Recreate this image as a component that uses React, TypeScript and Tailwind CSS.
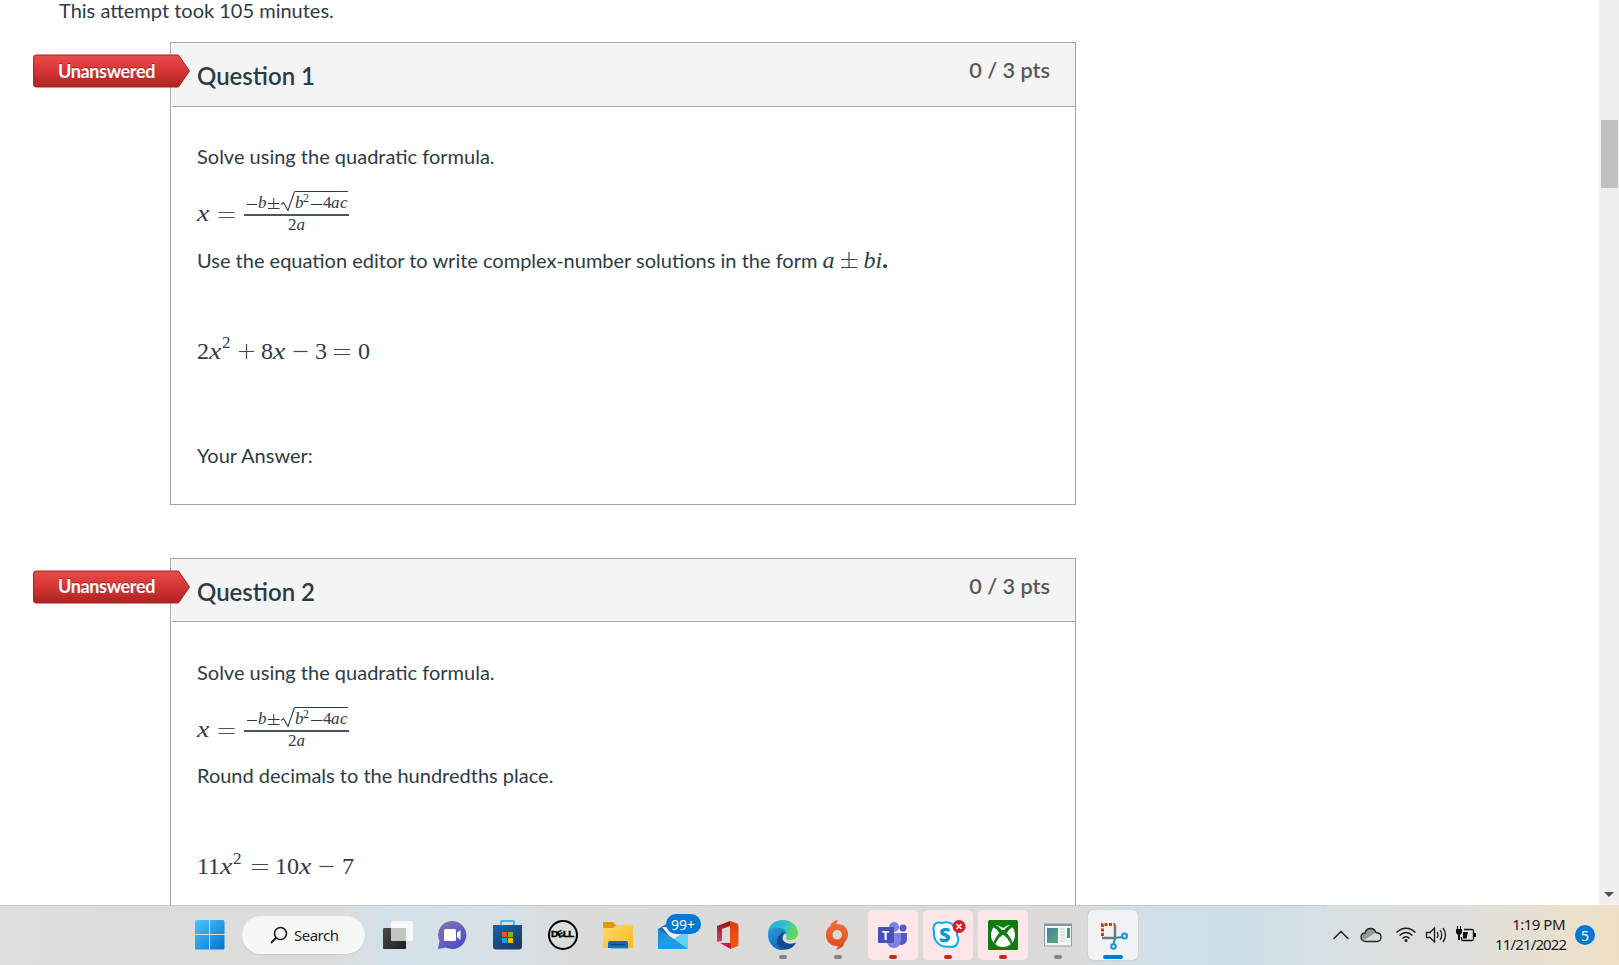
import type { ReactNode } from 'react';

type QuestionProps = {
  title: string;
  note: ReactNode;
  equation: ReactNode;
};

const X = () => <i className="inline-block w-[13px] scale-x-115 origin-left">x</i>;

const Fraction = () => (
  <div className="flex h-[47px] items-start text-[#2d3b45] font-['Liberation_Serif',serif]">
    <span className="w-[20px] pt-[10px] text-[24px] leading-[26px]"><X /></span>
    <svg width="18" height="45" className="mr-[9px]">
      <path d="M1.500 22.500H17.500M1.500 27.500H17.500" stroke="#4b5760" strokeWidth="1.200" />
    </svg>
    <div className="mt-px w-[105px] text-[17px] leading-[18px]">
      <div className="flex h-[25px] items-start border-b-2 border-[#4b5760] pl-[2px]">
        <svg width="11" height="22" className="shrink-0"><path d="M1 13.500H11" stroke="#2d3b45" /></svg>
        <i className="w-[10px] pt-[3px] pl-px">b</i>
        <svg width="13" height="22" className="shrink-0">
          <path d="M1 12.500H12.500M6.700 7V17.500M1 17.500H12.500" stroke="#2d3b45" />
        </svg>
        <svg width="15" height="22" className="shrink-0">
          <path d="M1 13.500L3.500 11.500L8 19.500L14.500 0.500" fill="none" stroke="#2d3b45" strokeWidth="1.100" />
        </svg>
        <div className="flex h-[20px] w-[53px] border-t border-[#2d3b45]">
          <i className="w-[8px] pt-[2px]">b</i>
          <span className="w-[7px] text-[12px] leading-[12px]">2</span>
          <svg width="13" height="20" className="shrink-0"><path d="M1 12.500H12.500" stroke="#2d3b45" /></svg>
          <span className="w-[8px] pt-[2px]">4</span>
          <i className="w-[9px] pt-[2px]">a</i>
          <i className="w-[8px] pt-[2px]">c</i>
        </div>
      </div>
      <div className="text-center">2<i>a</i></div>
    </div>
  </div>
);

const Op = ({ sign }: { sign: '+' | '-' | '=' | '±' }) => {
  const paths = {
    '+': 'M1 11.5H16M8.500 4V19',
    '-': 'M1.500 11.500H15.500',
    '=': 'M1 9.500H17M1 14.500H17',
    '±': 'M1 10.500H17M9 3V18M1 18.500H17',
  };
  return (
    <svg width="18" height="22" className="inline-block shrink-0">
      <path d={paths[sign]} stroke="#3d4a53" strokeWidth="1.200" fill="none" />
    </svg>
  );
};

const Sup = () => <sup className="relative -top-[8px] inline-block w-[9px] text-[17px] leading-none align-baseline">2</sup>;

const UnansweredTag = () => (
  <div className="absolute -left-[138px] top-[11px] h-[34px] w-[158px]">
    <svg width="158" height="34" className="absolute inset-0">
      <defs>
        <linearGradient id="tag" x1="0" y1="0" x2="0" y2="1">
          <stop offset="0" stopColor="#e94b48" />
          <stop offset="0.400" stopColor="#da3a39" />
          <stop offset="1" stopColor="#b02222" />
        </linearGradient>
      </defs>
      <path d="M3 1H145.500L156.500 17L145.500 33H3Q0.500 33 0.500 30.500V3.500Q0.500 1 3 1Z" fill="url(#tag)" stroke="#a82323" />
    </svg>
    <span className="absolute left-[25px] top-[5.500px] text-[18px] leading-[22px] font-bold tracking-[-0.35px] text-white [text-shadow:0_-1px_0_rgba(80,0,0,0.4)]">Unanswered</span>
  </div>
);

const Question = ({ title, note, equation }: QuestionProps) => (
  <section className="relative h-[462.500px] w-[906px] border border-[#a5a5a5] text-[20px] leading-[24px]">
    <UnansweredTag />
    <div className="ml-px flex h-[63.500px] items-start justify-between border-b border-[#a5a5a5] bg-[#f4f4f4] pl-[25px] pr-[25px]">
      <h2 className="pt-[19px] text-[24px] leading-[28px] font-semibold text-[#2d3b45]">{title}</h2>
      <span className="pt-[14px] text-[21.700px] leading-[26px] font-semibold text-[#595959]">0 / 3 pts</span>
    </div>
    <div className="flex flex-col pl-[26px] pt-[37.500px]">
      <p>Solve using the quadratic formula.</p>
      <div className="pt-[22px]"><Fraction /></div>
      <div className="flex h-[24px] mt-[10.500px]">{note}</div>
      <div className="mt-[64px] flex h-[30px] items-center font-['Liberation_Serif',serif] text-[24px]">{equation}</div>
      <p className="mt-[77.500px]">Your Answer:</p>
    </div>
  </section>
);

const WindowsIcon = () => (
  <svg width="30" height="30" viewBox="0 0 30 30">
    <defs>
      <linearGradient id="win" x1="0" y1="0" x2="1" y2="1"><stop stopColor="#4cc9fb" /><stop offset="1" stopColor="#0072d2" /></linearGradient>
    </defs>
    <path d="M0 1.500Q0 0 1.500 0H14V14H0ZM15 0H28Q29.500 0 29.500 1.500V14H15ZM0 15H14V29.500H1.500Q0 29.500 0 28ZM15 15H29.500V28Q29.500 29.500 28 29.500H15Z" fill="url(#win)" />
  </svg>
);

const TaskViewIcon = () => (
  <svg width="30" height="30" viewBox="0 0 30 30">
    <defs><linearGradient id="tv" x1="0" y1="0" x2="1" y2="1"><stop stopColor="#4a4a48" /><stop offset="1" stopColor="#1f1f1f" /></linearGradient></defs>
    <rect x="0" y="8" width="23" height="21" rx="1" fill="url(#tv)" />
    <rect x="8" y="1" width="22" height="20" rx="1" fill="#f8f8f8" />
    <path d="M8 8H23V21H9Q8 21 8 20Z" fill="#c4c4c3" />
  </svg>
);

const ChatIcon = () => (
  <svg width="30" height="30" viewBox="0 0 30 30">
    <defs><linearGradient id="chat" x1="0" y1="0" x2="0.700" y2="1"><stop stopColor="#8d6fa8" /><stop offset="0.500" stopColor="#6b62c4" /><stop offset="1" stopColor="#4f4ac5" /></linearGradient></defs>
    <path d="M14.500 1A14 14 0 1 1 8 27.500L0 29L1.500 21A14 14 0 0 1 14.500 1Z" fill="url(#chat)" />
    <rect x="6" y="9" width="12" height="12" rx="1.500" fill="#fff" />
    <path d="M19 13L22.500 10V20L19 17Z" fill="#fff" />
  </svg>
);

const StoreIcon = () => (
  <svg width="30" height="30" viewBox="0 0 30 30">
    <defs><linearGradient id="store" x1="0" y1="0" x2="0.700" y2="1"><stop stopColor="#0b67b2" /><stop offset="1" stopColor="#203864" /></linearGradient></defs>
    <path d="M8 6V2Q8 1 9 1H20Q21 1 21 2V6" fill="none" stroke="#30bdf2" strokeWidth="2" />
    <path d="M0 5H29V26.500Q29 29.500 26 29.500H3Q0 29.500 0 26.500Z" fill="url(#store)" />
    <path d="M9 12H14V17H9Z" fill="#f25022" /><path d="M15 12H20V17H15Z" fill="#7fba00" />
    <path d="M9 18H14V23H9Z" fill="#00a4ef" /><path d="M15 18H20V23H15Z" fill="#ffb900" />
  </svg>
);

const DellIcon = () => (
  <span className="flex size-[30px] items-center justify-center rounded-full border-2 border-black font-['Liberation_Sans',sans-serif] text-[9px] font-bold tracking-[-0.8px] text-black">
    <span className="scale-x-110 [-webkit-text-stroke:0.4px_black]">D<span className="inline-block -rotate-[30deg]">E</span>LL</span>
  </span>
);

const FolderIcon = () => (
  <svg width="30" height="30" viewBox="0 0 30 30">
    <defs><linearGradient id="folder" x1="0" y1="0" x2="1" y2="1"><stop stopColor="#ffdc6d" /><stop offset="1" stopColor="#fbb917" /></linearGradient></defs>
    <path d="M0 3Q0 2 1 2H10L13 5H29V12H0Z" fill="#dc9b08" />
    <path d="M0 8H10L14 5H29Q30 5 30 6V28H0Z" fill="url(#folder)" />
    <path d="M5 28V23Q5 21 7 21H23Q25 21 25 23V28Z" fill="#0b69b9" /><path d="M8 24.500H22" stroke="#06407b" /><path d="M8 28H25" stroke="#1895e6" />
  </svg>
);

const MailIcon = () => (
  <div className="relative">
    <svg width="30" height="30" viewBox="0 0 30 30">
      <defs><linearGradient id="mail" x1="0" y1="0" x2="1" y2="1"><stop stopColor="#1683d5" /><stop offset="1" stopColor="#35b8ef" /></linearGradient></defs>
      <path d="M0 9L15 0L30 9V29H0Z" fill="#1670b8" /><path d="M4 7H26V16L15 21Z" fill="#f1f1f1" />
      <path d="M0 9L16 19L30 10V29H0Z" fill="url(#mail)" /><path d="M0 29L16 19L30 29Z" fill="#209be0" /><path d="M16 19L30 10V29Z" fill="#65cff6" />
    </svg>
    <span className="absolute left-[8px] -top-[6px] flex h-[20px] w-[35px] items-center justify-center rounded-full bg-[#0078d4] text-[14px] text-white">99+</span>
  </div>
);

const OfficeIcon = () => (
  <svg width="24" height="30" viewBox="0 0 24 30">
    <defs>
      <linearGradient id="office" x1="0" y1="0" x2="0" y2="1"><stop stopColor="#e13b16" /><stop offset="1" stopColor="#f55d0a" /></linearGradient>
      <linearGradient id="office2" x1="0" y1="0" x2="0" y2="1"><stop stopColor="#8d1013" /><stop offset="1" stopColor="#d94269" /></linearGradient>
    </defs>
    <path d="M14 1L1 6V22L6 21V9L14 6Z" fill="url(#office2)" />
    <path d="M14 1L21 3.500Q22.500 4 22.500 6V24Q22.500 26 21 26.500L14 29Z" fill="url(#office)" />
    <path d="M4 23H15V29L13 28Z" fill="#d51539" />
  </svg>
);

const EdgeIcon = () => (
  <svg width="30" height="30" viewBox="0 0 30 30">
    <defs>
      <linearGradient id="edge1" x1="0" y1="0" x2="1" y2="0.300"><stop stopColor="#279ddd" /><stop offset="0.550" stopColor="#2fc2cf" /><stop offset="1" stopColor="#62d957" /></linearGradient>
      <linearGradient id="edge2" x1="0" y1="0" x2="0.600" y2="1"><stop stopColor="#25a2e4" /><stop offset="1" stopColor="#1162b5" /></linearGradient>
    </defs>
    <path d="M0 14C0 5 7 0 15 0C24 0 30 6 30 13C30 18 26 20 22 20C18 20 17 19 19 16C20 12 16 10 12 10C6 9 2 11 0 16Z" fill="url(#edge1)" />
    <path d="M0 15C1 9 6 7 11 8C16 8 19 12 19 16C18 13 14 11 11 15C7 20 11 28 17 30C7 31 0 24 0 15Z" fill="url(#edge2)" />
    <path d="M12 14C6 20 10 30 18 29.500C23 29 27 26 28 22C26 24 18 25 15 20C14 17 15 15 17 13C15 12 13 13 12 14Z" fill="#114c91" />
  </svg>
);

const OriginIcon = () => (
  <svg width="24" height="30" viewBox="0 0 24 30">
    <defs><linearGradient id="origin" x1="0" y1="0" x2="0" y2="1"><stop stopColor="#f07236" /><stop offset="1" stopColor="#d94c22" /></linearGradient></defs>
    <path transform="translate(-0.800 0)" d="M11 4L13 0C9 0 6 3 5 6C-1 10 0 20 4 23C7 26 10 26 13 26L11 30C16 28 19 26 19 23C25 17 23 10 20 7C17 4 14 4 11 4ZM12 10A4.800 4.800 0 1 1 12 19.600A4.800 4.800 0 1 1 12 10Z" fill="url(#origin)" fillRule="evenodd" />
  </svg>
);

const TeamsIcon = () => (
  <svg width="30" height="30" viewBox="0 0 30 30">
    <circle cx="16" cy="7" r="5" fill="#7b83eb" /><circle cx="25" cy="8" r="3.500" fill="#5059c9" />
    <path d="M20 13H29V20Q28 25 22 25H20Z" fill="#5059c9" /><path d="M9 13H23V20Q22 28 16 28Q11 28 9 23Z" fill="#7b83eb" />
    <rect x="0" y="7" width="16" height="16" rx="1" fill="#4650b8" /><text x="3.800" y="20" fontSize="13" fontWeight="700" fill="#fff" fontFamily="Open Sans">T</text>
  </svg>
);

const SkypeIcon = () => (
  <svg width="34" height="30" viewBox="0 0 34 30" className="ml-[3px]">
    <path d="M2 11.500C0 5 4 1 10 3C19 0 26 7 25 15C28.500 22 24 28.500 17 26.500C8 28 1 21 2 11.500Z" fill="#fff" stroke="#00aef0" strokeWidth="2" />
    <text x="7" y="22" fontSize="20" fontWeight="800" fill="#0799da" fontFamily="Open Sans">S</text>
    <circle cx="27" cy="6.500" r="6.500" fill="#e81123" /><path d="M24.500 4L29.500 9M29.500 4L24.500 9" stroke="#fff" strokeWidth="1.700" />
  </svg>
);

const XboxIcon = () => (
  <svg width="30" height="30" viewBox="0 0 30 30">
    <rect width="30" height="30" rx="1.500" fill="#107c10" /><circle cx="15" cy="15" r="12" fill="#fff" />
    <path d="M7 5Q11 5 15 8Q19 5 23 5Q19 2 15 2Q11 2 7 5Z" fill="#107c10" />
    <path d="M6 25C6 20 10 14 15 10C20 14 24 20 24 25Q20 17 15 14Q10 17 6 25Z" fill="#107c10" stroke="#107c10" /><path d="M7 5Q11 6 14.500 11L11 13Q9 9 5.500 7ZM23 5Q19 6 15.500 11L19 13Q21 9 24.500 7Z" fill="#107c10" />
  </svg>
);

const AppWindowIcon = () => (
  <svg width="30" height="30" viewBox="0 0 30 30">
    <defs><linearGradient id="app" x1="0" y1="0" x2="1" y2="1"><stop stopColor="#447eaa" /><stop offset="1" stopColor="#55b36b" /></linearGradient></defs>
    <rect x="1.500" y="4" width="27" height="22" fill="#f5f5f5" stroke="#9299a0" /><path d="M1 5H29" stroke="#8d959f" strokeWidth="2" />
    <rect x="4" y="8" width="11" height="15" fill="url(#app)" /><path d="M17 9H22M17 12H22M17 15H22M17 18H22M17 21H22" stroke="#c9cdd0" /><rect x="24" y="8" width="3" height="10" fill="#4c966d" />
  </svg>
);

const SnipIcon = () => (
  <svg width="30" height="30" viewBox="0 0 30 30">
    <path d="M4.500 16V4.500H17" fill="none" stroke="#d83b01" strokeWidth="3" strokeDasharray="3 1.500" />
    <path d="M17 5V18M4 18H18" stroke="#777" strokeWidth="2.500" /><path d="M17 18L24 17M17 18L15.500 25" stroke="#248fc9" strokeWidth="2" />
    <circle cx="26.500" cy="16" r="2.500" fill="none" stroke="#1492dd" strokeWidth="2" /><circle cx="15.500" cy="26.500" r="2.300" fill="none" stroke="#1492dd" strokeWidth="2" />
  </svg>
);

const apps = [
  { name: 'tasks', icon: <TaskViewIcon />, tile: '', mark: '' },
  { name: 'chat', icon: <ChatIcon />, tile: '', mark: '' },
  { name: 'store', icon: <StoreIcon />, tile: '', mark: '' },
  { name: 'dell', icon: <DellIcon />, tile: '', mark: '' },
  { name: 'files', icon: <FolderIcon />, tile: '', mark: '' },
  { name: 'mail', icon: <MailIcon />, tile: '', mark: '' },
  { name: 'office', icon: <OfficeIcon />, tile: '', mark: '' },
  { name: 'edge', icon: <EdgeIcon />, tile: '', mark: 'w-[8px] bg-[#858585]' },
  { name: 'origin', icon: <OriginIcon />, tile: '', mark: 'w-[8px] bg-[#858585]' },
  { name: 'teams', icon: <TeamsIcon />, tile: 'bg-[#fde6e8]', mark: 'w-[8px] bg-[#c42b1c]' },
  { name: 'skype', icon: <SkypeIcon />, tile: 'bg-[#fde6e8]', mark: 'w-[8px] bg-[#c42b1c]' },
  { name: 'xbox', icon: <XboxIcon />, tile: 'bg-[#fde6e8]', mark: 'w-[8px] bg-[#c42b1c]' },
  { name: 'window', icon: <AppWindowIcon />, tile: '', mark: 'w-[8px] bg-[#858585]' },
  { name: 'snip', icon: <SnipIcon />, tile: 'bg-[#f0f2f3] shadow-[0_0_1px_#888]', mark: 'w-[20px] bg-[#0078d4]' },
];

const Tray = () => (
  <div className="ml-auto flex h-[60px] items-center pr-[24px] text-[#1b1b1b]">
    <svg width="18" height="20" className="mr-[10px]"><path d="M1.500 14L9 6.500L16.500 14" fill="none" stroke="currentColor" strokeWidth="1.400" /></svg>
    <svg width="22" height="20" className="mr-[13px]">
      <path d="M5.500 16.500Q1 16 1 12Q1 8.500 5 8Q6 3.500 10.500 3.500Q14.500 3.500 16 7.500Q21 8 21 12Q21 16.500 17 16.500Z" fill="#d9d9d9" />
      <path d="M5 8Q6 3.500 10.500 3.500Q14.500 3.500 16 7.500L4 15Q1 14 1 12Q1 8.500 5 8Z" fill="#999" />
      <path d="M5.500 16.500Q1 16 1 12Q1 8.500 5 8Q6 3.500 10.500 3.500Q14.500 3.500 16 7.500Q21 8 21 12Q21 16.500 17 16.500Z" fill="none" stroke="#262626" strokeWidth="1.300" />
    </svg>
    <svg width="22" height="20" className="mr-[8px]" fill="none" stroke="currentColor" strokeWidth="1.400">
      <path d="M1.500 7.500Q11 -1 20.500 7.500M4.500 10.500Q11 4.500 17.500 10.500M7.500 13.500Q11 10 14.500 13.500" /><circle cx="11" cy="15.500" r="1.500" fill="currentColor" stroke="none" />
    </svg>
    <svg width="22" height="20" className="mr-[8px]" fill="none" stroke="currentColor" strokeWidth="1.300">
      <path d="M1.500 7.500H5L9.500 3V17L5 12.500H1.500ZM12 7Q14 10 12 13M15 5Q18.500 10 15 15M18 3Q23 10 18 17" />
    </svg>
    <svg width="22" height="20" className="mr-[18px]">
      <path d="M9 4.500H17Q18.500 4.500 18.500 6V14Q18.500 15.500 17 15.500H8Q6.500 15.500 6.500 14V12" fill="none" stroke="#111" strokeWidth="1.300" />
      <path d="M1 4H7V8L5 10V15H3V10L1 8ZM2 1H3V4H2ZM5 1H6V4H5ZM8 7H13L11.500 13.500H8ZM19 8H21V12H19Z" fill="#111" />
    </svg>
    <div className="-mt-[2px] w-[70px] text-right text-[15px] leading-[20px] tracking-[-0.85px] whitespace-nowrap">
      <div className="tracking-[-0.5px]">1:19 PM</div>
      <div>11/21/2022</div>
    </div>
    <span className="ml-[10px] flex size-[20px] items-center justify-center rounded-full bg-[#0078d4] text-[14px] text-white">5</span>
  </div>
);

const Taskbar = () => (
  <footer className="flex h-[60px] shrink-0 flex-col bg-[linear-gradient(90deg,#dcdddc_0px,#dcdddb_330px,#d2e1ea_390px,#d7e0e5_500px,#dbdbda_590px,#dcdad8_1060px,#cfe0ea_1170px,#cfdfe8_1250px,#d9dfe2_1340px,#dddfde_1450px,#ece1cc_1580px,#efdfc6_1619px)] font-['Noto_Sans',sans-serif]">
    <div className="h-px w-[1326px] bg-[#c6c8c8]" />
    <div className="-mt-px flex h-[60px] items-center">
      <div className="flex items-center pl-[195px]">
        <WindowsIcon />
        <div className="ml-[17px] flex h-[38px] w-[123px] items-center rounded-full bg-[#f7f7f7] pl-[28px] text-[15px] tracking-[-0.5px] text-[#1b1b1b] shadow-[0_1px_1px_#ccc]">
          <svg width="18" height="18" className="mr-[6px]"><path d="M1 17L6.500 11.500" stroke="#1b1b1b" strokeWidth="1.800" /><circle cx="10.500" cy="7.500" r="6" fill="none" stroke="#1b1b1b" strokeWidth="1.600" /></svg>
          Search
        </div>
      </div>
      <div className="ml-[5px] flex">
        {apps.map((app) => (
          <div key={app.name} className="flex h-[60px] w-[55px] items-center justify-center">
            <div className={`relative flex h-[50px] w-[50px] items-center justify-center rounded-[5px] ${app.tile}`}>
              {app.icon}
              {app.mark && <span className={`absolute bottom-[1px] h-[4px] rounded-full ${app.mark}`} />}
            </div>
          </div>
        ))}
      </div>
      <Tray />
    </div>
  </footer>
);

export default function App() {
  return (
    <div className="flex h-[965px] w-[1619px] flex-col overflow-hidden bg-white font-['Lato',sans-serif] text-[#2d3b45]">
      <div className="flex h-[905px] shrink-0 overflow-hidden">
        <main className="flex flex-1 flex-col pl-[170px]">
          <p className="-ml-[111px] -mt-[2px] h-[44.400px] shrink-0 text-[20px] leading-[24px]">This attempt took 105 minutes.</p>
          <div className="flex flex-col gap-[53px]">
            <Question
              title="Question 1"
              note={
                <>
                  Use the equation editor to write complex-number solutions in the form
                  <span className="ml-[5px] mt-px flex items-center font-['Liberation_Serif',serif] text-[24px]">
                    <i className="mr-[6px]">a</i><Op sign="±" /><i className="ml-[5px]">bi</i><b>.</b>
                  </span>
                </>
              }
              equation={
                <>
                  2<X /><Sup /><span className="w-[7px]" /><Op sign="+" /><span className="w-[5px]" />8<X />
                  <span className="w-[6px]" /><Op sign="-" /><span className="w-[5px]" />3
                  <span className="w-[6px]" /><Op sign="=" /><span className="w-[7px]" />0
                </>
              }
            />
            <Question
              title="Question 2"
              note="Round decimals to the hundredths place."
              equation={
                <>
                  11<X /><Sup /><span className="w-[9px]" /><Op sign="=" /><span className="w-[6px]" />10<X />
                  <span className="w-[6px]" /><Op sign="-" /><span className="w-[6px]" />7
                </>
              }
            />
          </div>
        </main>
        <div className="flex w-[20px] flex-col items-center justify-between bg-[#f0f0f0] pt-[120px] pb-[8px]">
          <div className="h-[68px] w-[17px] bg-[#c1c1c1]" />
          <svg width="10" height="6"><path d="M0 1H10L5 6Z" fill="#505050" /></svg>
        </div>
      </div>
      <Taskbar />
    </div>
  );
}
